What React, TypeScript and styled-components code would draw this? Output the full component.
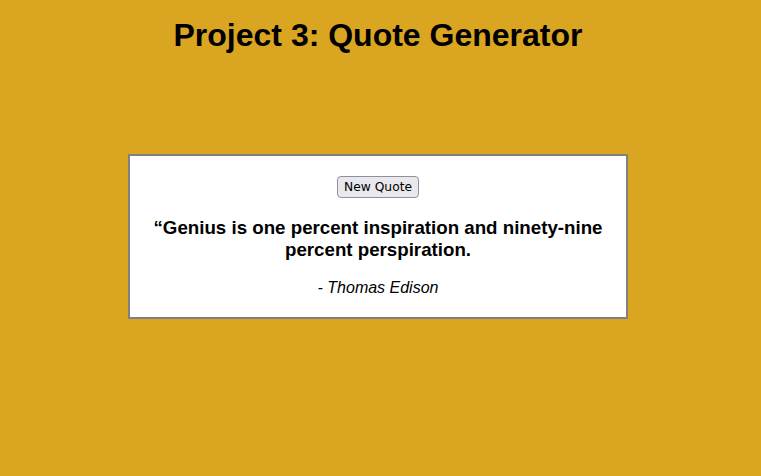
import React from "react";
import styled, { createGlobalStyle } from "styled-components";

const Global = createGlobalStyle`
  html, body {
    margin: 0;
    padding: 0;
    background: #daa520;
  }
  body {
    font-family: "Liberation Sans", Arial, sans-serif;
    color: #000;
    min-height: 476px;
  }
`;

const Page = styled.div`
  display: flex;
  flex-direction: column;
  align-items: center;
  padding: 17px 5px 0 0;
`;

const Title = styled.h1`
  margin: 0;
  font-size: 32px;
  font-weight: bold;
  line-height: 37px;
`;

const Card = styled.div`
  box-sizing: border-box;
  width: 500px;
  height: 165px;
  margin-top: 100px;
  background: #fff;
  border: 2px solid #808080;
  display: flex;
  flex-direction: column;
  align-items: center;
  padding: 20px 20px 0;
`;

const Button = styled.button`
  box-sizing: border-box;
  height: 22px;
  padding: 0 6px;
  font-family: "DejaVu Sans", "Noto Sans", sans-serif;
  font-size: 12.3px;
  color: #000;
  background: #e9e9ed;
  border: 1px solid #8f8f9d;
  border-radius: 4px;
`;

const Quote = styled.h3`
  margin: 19px 0 0;
  font-size: 18.72px;
  font-weight: bold;
  line-height: normal;
  text-align: center;
`;

const Author = styled.p`
  margin: 18px 0 0;
  font-size: 16px;
  font-style: italic;
  line-height: normal;
`;

export default function App() {
  return (
    <>
      <Global />
      <Page>
        <Title>Project 3: Quote Generator</Title>
        <Card>
          <Button>New Quote</Button>
          <Quote>“Genius is one percent inspiration and ninety-nine percent perspiration.</Quote>
          <Author>- Thomas Edison</Author>
        </Card>
      </Page>
    </>
  );
}
